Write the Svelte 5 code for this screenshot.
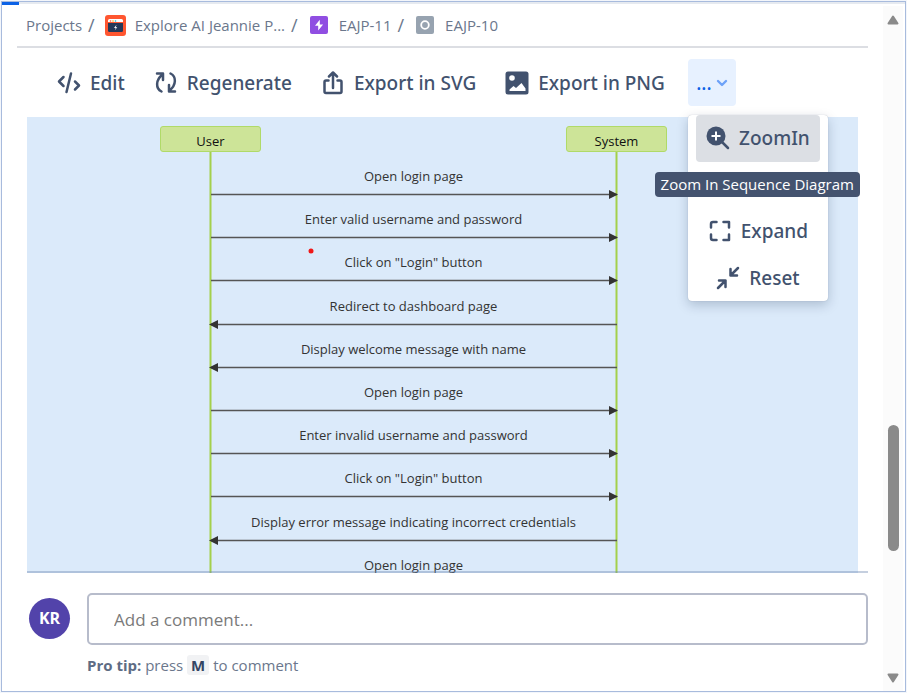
<script>
  const messages = [
    { text: 'Open login page', right: true },
    { text: 'Enter valid username and password', right: true },
    { text: 'Click on "Login" button', right: true },
    { text: 'Redirect to dashboard page', right: false },
    { text: 'Display welcome message with name', right: false },
    { text: 'Open login page', right: true },
    { text: 'Enter invalid username and password', right: true },
    { text: 'Click on "Login" button', right: true },
    { text: 'Display error message indicating incorrect credentials', right: false },
    { text: 'Open login page', right: true }
  ].map((m, i) => ({ ...m, y: Math.round(78 + i * 43.2) }));

  const actors = [
    { name: 'User', x: 183.5 },
    { name: 'System', x: 589.5 }
  ];

  let comment = $state('');
</script>

<div class="window">
  <div class="progress"></div>
  <main>
    <nav aria-label="Breadcrumb">
      <a href="#projects">Projects</a>
      <span class="slash">/</span>
      <svg class="project" viewBox="0 0 21 21" width="21" height="21" aria-hidden="true">
        <rect width="21" height="21" rx="3" fill="#ff5630" />
        <path d="M3 7V5.5A1.5 1.5 0 0 1 4.500 4h12A1.500 1.500 0 0 1 18 5.500V7z" fill="#fff" />
        <path d="M3 8h15v7.500a1.500 1.500 0 0 1-1.500 1.500h-12A1.500 1.500 0 0 1 3 15.500z" fill="#253858" />
        <circle cx="5.500" cy="6" r=".8" fill="#ff5630" />
        <circle cx="8" cy="6" r=".8" fill="#ffab00" />
        <circle cx="10.500" cy="6" r=".8" fill="#00b8d9" />
        <path d="M11.500 9.800 9 12.900h1.700l-.8 2.300 2.400-3h-1.600z" fill="#fff" />
      </svg>
      <a href="#project">Explore AI Jeannie P...</a>
      <span class="slash">/</span>
      <svg class="issue" viewBox="0 0 18 18" width="18" height="18" aria-hidden="true">
        <rect width="18" height="18" rx="2" fill="#904ee2" />
        <path d="M9.800 3.800 5 9.800h3.200v4.600l4.900-6H9.800z" fill="#fff" />
      </svg>
      <a href="#eajp-11">EAJP-11</a>
      <span class="slash">/</span>
      <svg class="issue" viewBox="0 0 18 18" width="18" height="18" aria-hidden="true">
        <rect width="18" height="18" rx="2" fill="#97a3b0" />
        <circle cx="9" cy="9" r="3.800" fill="none" stroke="#fff" stroke-width="1.800" />
      </svg>
      <a href="#eajp-10">EAJP-10</a>
    </nav>

    <div class="toolbar">
      <button type="button">
        <svg viewBox="0 0 24 24" width="24" height="24" aria-hidden="true">
          <path d="M6.500 6 2 10.500 6.500 15M18 10.500 22 14.500l-4 4M14 2.500 9.500 21" class="line" />
        </svg>
        Edit
      </button>
      <button type="button">
        <svg viewBox="0 0 24 24" width="24" height="24" aria-hidden="true">
          <path d="M7.500 20.500C1.500 17.500 1.500 9 8.500 3.500M3 2.500h6v6.500M16.500 2.500c6 3 6 11.500-1 17M21 20.500h-6V14" class="line" />
        </svg>
        Regenerate
      </button>
      <button type="button">
        <svg viewBox="0 0 24 24" width="24" height="24" aria-hidden="true">
          <path d="M7.500 9.500H5A1.500 1.500 0 0 0 3.500 11V20.500A1.500 1.500 0 0 0 5 22h14a1.500 1.500 0 0 0 1.500-1.500V11A1.500 1.500 0 0 0 19 9.500H16.500M12 17V2M8 5.500 12 1.500l4 4" class="line" />
        </svg>
        Export in SVG
      </button>
      <button type="button">
        <svg viewBox="0 0 24 24" width="24" height="24" aria-hidden="true">
          <rect x=".5" y=".5" width="23" height="23" rx="2.500" fill="#42526e" />
          <circle cx="7" cy="7" r="2.800" fill="#fff" />
          <path d="M4.500 20v-1.500l4-3.500 2.500 2L16.500 12l4 5.500V20z" fill="#fff" />
        </svg>
        Export in PNG
      </button>
      <div class="more">
        <button type="button" class="trigger" aria-label="More actions" aria-expanded="true">
          <span>...</span>
          <svg viewBox="0 0 12 8" width="12" height="8" aria-hidden="true">
            <path d="m2 2 4 4 4-4" fill="none" stroke="#6da2f8" stroke-width="2.400" stroke-linecap="round" stroke-linejoin="round" />
          </svg>
        </button>
        <div class="menu">
          <button type="button" class="active">
            <svg viewBox="0 0 24 24" width="24" height="24" aria-hidden="true">
              <circle cx="10" cy="10" r="9.500" fill="#42526e" />
              <path d="m16 16 6 6" class="line" />
              <path d="M10 5.500v9M5.500 10h9" stroke="#fff" stroke-width="2" />
            </svg>
            ZoomIn
          </button>
          <button type="button">
            <svg viewBox="0 0 24 24" width="24" height="24" aria-hidden="true">
              <path d="M8.500 3H5a2 2 0 0 0-2 2v3.500M15.500 3H21v5.500M21 15.500V21h-5.500M8.500 21H5a2 2 0 0 1-2-2v-3.500" class="line" />
            </svg>
            Expand
          </button>
          <button type="button">
            <svg viewBox="0 0 24 24" width="24" height="24" aria-hidden="true">
              <path d="m22 2-7.500 7.500M14.500 3v6.500H21M2 22l7.500-7.500M3 14.500h6.500V21" class="line" />
            </svg>
            Reset
          </button>
          <div class="tooltip" role="tooltip">Zoom In Sequence Diagram</div>
        </div>
      </div>
    </div>

    <section class="diagram" aria-label="Sequence diagram">
      <svg viewBox="0 0 831 456" role="img" aria-label="Login sequence">
        {#each actors as a}
          <path d="M{a.x} 35V456" stroke="#a4d04b" stroke-width="2" />
          <rect x={a.x - 50} y="9.500" width="100" height="25" rx="2.500" fill="#cde498" stroke="#b0da68" />
          <text class="actor" x={a.x} y="29">{a.name}</text>
        {/each}
        {#each messages as m}
          <text x="386.500" y={m.y - 14}>{m.text}</text>
          <path d="M184 {m.y - 0.5}H590" stroke="#555" stroke-width="1.500" />
          {#if m.right}
            <path d="M582 {m.y - 5}l9 4.500-9 4.500z" fill="#333" />
          {:else}
            <path d="M191 {m.y - 5}l-9 4.500 9 4.500z" fill="#333" />
          {/if}
        {/each}
        <circle cx="284" cy="134" r="2.500" fill="#f01818" />
      </svg>
    </section>

    <div class="composer">
      <div class="avatar">KR</div>
      <div class="field">
        <input type="text" aria-label="Add a comment" placeholder="Add a comment..." bind:value={comment} />
        <p><strong>Pro tip:</strong> press <kbd>M</kbd> to comment</p>
      </div>
    </div>
  </main>
  <div class="scrollbar" aria-hidden="true">
    <svg viewBox="0 0 12 10" width="12" height="10"><path d="M6 1.500 10.500 8.500h-9z" /></svg>
    <div class="track"><div class="thumb"></div></div>
    <svg viewBox="0 0 12 10" width="12" height="10"><path d="M6 8.500 10.500 1.500h-9z" /></svg>
  </div>
</div>

<style>
  :global(body) {
    background: #f3f6fb;
  }
  .window {
    position: relative;
    box-sizing: border-box;
    display: flex;
    min-height: calc(100vh - 2px);
    margin: 1px;
    border: 1px solid #a8bbdd;
    background: #fff;
    box-shadow: inset 0 3px 0 -1px #e6eaf0;
    font-family: "Open Sans", "Noto Sans", sans-serif;
    color: #42526e;
  }
  .progress {
    position: absolute;
    top: 0;
    left: 0;
    width: 17px;
    height: 3px;
    background: #0c62e6;
  }
  main {
    flex: 1;
    min-width: 0;
    padding: 2px 15px 0 15px;
  }
  nav {
    display: flex;
    align-items: center;
    height: 42px;
    padding-left: 9px;
    border-bottom: 2px solid #dcdee3;
    font-size: 15px;
    white-space: nowrap;
  }
  nav a {
    color: #6b778c;
    text-decoration: none;
  }
  .slash {
    margin-left: 6px;
    color: #6b778c;
    font-size: 18px;
  }
  .project {
    margin: 0 9px 0 10px;
  }
  .issue {
    margin: 0 11px 0 12px;
  }
  button {
    display: flex;
    align-items: center;
    justify-content: center;
    gap: 9px;
    height: 47px;
    padding: 0;
    border: 0;
    border-radius: 4px;
    background: none;
    color: #42526e;
    font: 500 19px "Noto Sans", "Open Sans", sans-serif;
    white-space: nowrap;
  }
  .line {
    fill: none;
    stroke: #42526e;
    stroke-width: 2.500;
    stroke-linecap: round;
    stroke-linejoin: round;
  }
  .toolbar {
    display: flex;
    gap: 29px;
    padding: 11px 0 11px 40px;
  }
  .more {
    position: relative;
    margin-left: -6px;
  }
  .trigger {
    gap: 4px;
    width: 48px;
    background: #e7f1ff;
    color: #0c62e6;
  }
  .menu {
    position: absolute;
    z-index: 1;
    top: 56px;
    left: 0;
    box-sizing: border-box;
    display: flex;
    flex-direction: column;
    width: 140px;
    height: 186px;
    padding: 0 8px;
    border-radius: 4px;
    background: #fff;
    box-shadow: 0 4px 12px rgba(9, 30, 66, 0.22), 0 0 1px rgba(9, 30, 66, 0.3);
  }
  .menu .active {
    margin-bottom: 46px;
    background: #dcdfe4;
  }
  .tooltip {
    position: absolute;
    top: 57px;
    right: -32px;
    padding: 0 6px;
    border-radius: 4px;
    background: #44536f;
    color: #fff;
    font-size: 15px;
    font-family: "Open Sans", "Noto Sans", sans-serif;
    line-height: 25px;
    white-space: nowrap;
  }
  .diagram {
    position: relative;
    margin-left: 10px;
  }
  .diagram::after {
    content: "";
    position: absolute;
    right: 0;
    bottom: 0;
    left: 0;
    height: 2px;
    background: rgba(110, 135, 175, 0.4);
  }
  .diagram svg {
    display: block;
    width: calc(100% - 10px);
    background: #dbeafa;
  }
  text {
    fill: #333;
    font: 13px "Open Sans", "Noto Sans", sans-serif;
    text-anchor: middle;
  }
  .actor {
    fill: #111;
  }
  .composer {
    display: flex;
    gap: 17px;
    padding: 20px 0 0 12px;
  }
  .avatar {
    flex: none;
    width: 41px;
    height: 41px;
    margin-top: 5px;
    border-radius: 50%;
    background: #5243aa;
    color: #fff;
    font-size: 16px;
    font-weight: 700;
    line-height: 41px;
    text-align: center;
  }
  .field {
    flex: 1;
    min-width: 0;
  }
  input {
    box-sizing: border-box;
    display: block;
    width: 100%;
    height: 52px;
    padding: 0 25px;
    border: 2px solid #b7bccb;
    border-radius: 5px;
    background: #fff;
    font: 17px "Open Sans", "Noto Sans", sans-serif;
  }
  input::placeholder {
    color: #7a7a7a;
    opacity: 1;
  }
  p {
    margin: 9px 0 0;
    color: #6b778c;
    font-size: 15px;
    line-height: 22px;
  }
  strong {
    color: #5e6c84;
  }
  kbd {
    padding: 0 4px;
    border-radius: 3px;
    background: #f1f2f4;
    color: #344563;
    font: inherit;
    font-weight: 700;
  }
  .scrollbar {
    display: flex;
    flex-direction: column;
    align-items: center;
    width: 20px;
    margin: 4px 2px 0 0;
    padding: 9px 0 8px;
    box-sizing: border-box;
    background: #fbfbfb;
  }
  .scrollbar path {
    fill: #8a8a8a;
    stroke: #8a8a8a;
    stroke-width: 2;
    stroke-linejoin: round;
  }
  .track {
    display: flex;
    flex: 1;
    flex-direction: column;
  }
  .track::before {
    content: "";
    flex: 400;
  }
  .track::after {
    content: "";
    flex: 122;
  }
  .thumb {
    flex: 126;
    width: 11px;
    border-radius: 6px;
    background: #8a8a8a;
  }
</style>
